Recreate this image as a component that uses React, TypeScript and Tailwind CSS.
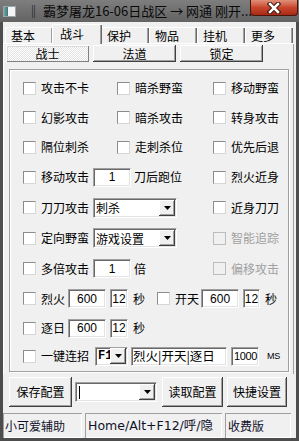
import React from "react";

const NUM = "font-['Liberation_Sans',Arial,sans-serif]";
const RAISED =
  "bg-[#f0f0f0] shadow-[inset_-1px_-1px_0_#404040,inset_1px_1px_0_#ffffff,inset_-2px_-2px_0_#a0a0a0,inset_2px_2px_0_#f0f0f0]";
const SUNKEN =
  "bg-white border border-t-[#a0a0a0] border-l-[#a0a0a0] border-r-white border-b-white shadow-[inset_1px_1px_0_#696969,inset_-1px_-1px_0_#e3e3e3]";

function Arrow() {
  return (
    <svg width="7" height="4" viewBox="0 0 7 4" className="block">
      <path d="M0 0H7L3.5 4Z" fill="#000" />
    </svg>
  );
}

function Check({ disabled = false }: { disabled?: boolean }) {
  return (
    <span
      className={`block w-[13px] h-[13px] shrink-0 border ${
        disabled
          ? "border-[#bcbcbc] bg-[#f0f0f0]"
          : "border-t-[#8c8c8c] border-l-[#8c8c8c] border-r-[#d6d6d6] border-b-[#d6d6d6] bg-white"
      }`}
    />
  );
}

function CL({ label, disabled = false }: { label: string; disabled?: boolean }) {
  return (
    <div className="flex items-center">
      <Check disabled={disabled} />
      <span className={`ml-[5px] ${disabled ? "text-[#a0a0a0]" : ""}`}>{label}</span>
    </div>
  );
}

function Field({ className = "", children }: { className?: string; children?: React.ReactNode }) {
  return <div className={`${SUNKEN} h-[19px] flex items-center shrink-0 ${NUM} ${className}`}>{children}</div>;
}

function Combo({ className = "", children }: { className?: string; children?: React.ReactNode }) {
  return (
    <div className={`${SUNKEN} flex items-center pl-[2px] pr-[1px] shrink-0 ${className}`}>
      <div className="flex-1 min-w-0 flex items-center leading-[15px] whitespace-nowrap">{children}</div>
      <div className={`${RAISED} w-[16px] h-[16px] flex items-center justify-center shrink-0`}>
        <Arrow />
      </div>
    </div>
  );
}

function Btn({ className = "", children }: { className?: string; children?: React.ReactNode }) {
  return <div className={`${RAISED} flex items-center justify-center shrink-0 ${className}`}>{children}</div>;
}

const tabs = ["基本", "战斗", "保护", "物品", "挂机", "更多"];

export default function App() {
  return (
    <div className="w-[299px] h-[441px] bg-[#4d4d4d] flex flex-col overflow-hidden font-['Noto_Sans_CJK_SC',sans-serif] text-[12px] leading-none text-black">
      {/* title bar */}
      <div className="h-[22px] shrink-0 flex items-start bg-gradient-to-b from-[#7e7e7e] to-[#636363]">
        <div className="ml-[3px] mt-[6px]">
          <svg width="13" height="11" viewBox="0 0 13 11" className="block">
            <rect x="0" y="0" width="13" height="11" fill="#f4f4f4" />
            <rect x="0" y="0" width="2" height="11" fill="#6fa0b0" />
            <rect x="2" y="0" width="2" height="11" fill="#4f9a6a" />
            <rect x="4" y="0" width="1" height="11" fill="#3f6fb0" />
            <rect x="0.5" y="0.5" width="12" height="10" fill="none" stroke="#9aa4a8" />
          </svg>
        </div>
        <div className="ml-[11px] mt-[3px] text-[13px] leading-[16px] whitespace-nowrap flex-1 min-w-0 text-[#0a0a0a]">
          ‖ 霸梦屠龙16-06日战区 → 网通 刚开...
        </div>
        <div className="mr-[1px] w-[48px] h-[16px] shrink-0 rounded-b-[4px] border border-t-0 border-[#4a1408] bg-gradient-to-b from-[#e0907a] via-[#c8452c] to-[#a82a14] flex items-center justify-center">
          <svg width="14" height="12" viewBox="0 0 14 12" className="block">
            <path d="M3 2L11 10M11 2L3 10" stroke="#3a1208" strokeWidth="4.5" strokeLinecap="square" />
            <path d="M3 2L11 10M11 2L3 10" stroke="#ffffff" strokeWidth="2.5" strokeLinecap="square" />
          </svg>
        </div>
      </div>

      {/* client */}
      <div className="flex-1 mx-[3px] mb-[3px] bg-[#f0f0f0] flex flex-col">
        {/* tabs */}
        <div className="h-[21px] flex items-end pl-[2px] shrink-0">
          {tabs.map((t) =>
            t === "战斗" ? (
              <div
                key={t}
                className="relative z-10 w-[50px] h-[20px] -mx-[1px] -mb-[1px] pb-[1px] pl-[7px] flex items-center bg-[#f0f0f0] border-l border-t border-white rounded-tl-[2px] shadow-[inset_-1px_0_0_#696969,inset_-2px_0_0_#a0a0a0]"
              >
                {t}
              </div>
            ) : (
              <div
                key={t}
                className="w-[48px] h-[16px] pl-[5px] flex items-center bg-[#f0f0f0] border-l border-t border-white rounded-tl-[2px] shadow-[inset_-1px_0_0_#696969,inset_-2px_0_0_#a0a0a0]"
              >
                {t}
              </div>
            )
          )}
        </div>

        {/* tab page */}
        <div className="w-[291px] h-[331px] shrink-0 border-t border-l border-white shadow-[inset_-1px_0_0_#a0a0a0] flex flex-col">
          <div className="mt-[1px] ml-[2px] flex gap-[4px]">
            <div className="w-[83px] h-[17px] flex items-center justify-center bg-[image:repeating-conic-gradient(#ffffff_0%_25%,#e2e2e2_0%_50%)] bg-[length:2px_2px] shadow-[inset_1px_1px_0_#ffffff,inset_-1px_-1px_0_#808080,inset_2px_2px_0_#d8d8d8]">
              战士
            </div>
            <Btn className="w-[83px] h-[17px]">法道</Btn>
            <Btn className="w-[83px] h-[17px]">锁定</Btn>
          </div>

          {/* group box */}
          <div className="mt-[7px] ml-[5px] w-[280px] h-[303px] border border-[#a0a0a0] shadow-[inset_1px_1px_0_#ffffff,1px_1px_0_#ffffff] pt-[3px] pl-[13px] flex flex-col">
            <div className="h-[30px] flex items-center">
              <div className="w-[94px]"><CL label="攻击不卡" /></div>
              <div className="w-[96px]"><CL label="暗杀野蛮" /></div>
              <CL label="移动野蛮" />
            </div>
            <div className="h-[29px] flex items-center">
              <div className="w-[94px]"><CL label="幻影攻击" /></div>
              <div className="w-[96px]"><CL label="暗杀攻击" /></div>
              <CL label="转身攻击" />
            </div>
            <div className="h-[30px] flex items-center">
              <div className="w-[94px]"><CL label="隔位刺杀" /></div>
              <div className="w-[96px]"><CL label="走刺杀位" /></div>
              <CL label="优先后退" />
            </div>
            <div className="h-[30px] flex items-center">
              <div className="w-[190px] flex items-center">
                <Check />
                <span className="ml-[5px]">移动攻击</span>
                <Field className="ml-[4px] w-[38px] justify-center">1</Field>
                <span className="ml-[3px]">刀后跑位</span>
              </div>
              <CL label="烈火近身" />
            </div>
            <div className="h-[31px] flex items-center">
              <div className="w-[190px] flex items-center">
                <Check />
                <span className="ml-[5px]">刀刀攻击</span>
                <Combo className="ml-[4px] w-[84px] h-[20px]">刺杀</Combo>
              </div>
              <CL label="近身刀刀" />
            </div>
            <div className="h-[30px] flex items-center">
              <div className="w-[190px] flex items-center">
                <Check />
                <span className="ml-[5px]">定向野蛮</span>
                <Combo className="ml-[4px] w-[84px] h-[20px]">游戏设置</Combo>
              </div>
              <CL label="智能追踪" disabled />
            </div>
            <div className="h-[31px] flex items-center">
              <div className="w-[190px] flex items-center">
                <Check />
                <span className="ml-[5px]">多倍攻击</span>
                <Field className="ml-[4px] w-[38px] justify-center">1</Field>
                <span className="ml-[3px]">倍</span>
              </div>
              <CL label="偏移攻击" disabled />
            </div>
            <div className="h-[29px] flex items-center">
              <Check />
              <span className="ml-[5px]">烈火</span>
              <Field className="ml-[3px] w-[38px] justify-center">600</Field>
              <Field className="ml-[4px] w-[18px] justify-center">12</Field>
              <span className="ml-[5px]">秒</span>
              <div className="ml-[12px]"><Check /></div>
              <span className="ml-[5px]">开天</span>
              <Field className="ml-[2px] w-[38px] justify-center">600</Field>
              <Field className="ml-[4px] w-[17px] justify-center">12</Field>
              <span className="ml-[5px]">秒</span>
            </div>
            <div className="h-[30px] flex items-center">
              <Check />
              <span className="ml-[5px]">逐日</span>
              <Field className="ml-[3px] w-[38px] justify-center">600</Field>
              <Field className="ml-[4px] w-[18px] justify-center">12</Field>
              <span className="ml-[5px]">秒</span>
            </div>
            <div className="h-[26px] flex items-center">
              <Check />
              <span className="ml-[5px]">一键连招</span>
              <Combo className="ml-[6px] w-[33px] h-[19px]">
                <span className="font-['Liberation_Mono',monospace] text-[12px] font-bold">F1</span>
              </Combo>
              <Field className="ml-[3px] w-[96px] pl-[1px]">
                <span className="font-['Noto_Sans_CJK_SC',sans-serif] text-[12.5px]">烈火|开天|逐日</span>
              </Field>
              <Field className="ml-[4px] w-[28px] pl-[2px] text-[11px] tracking-[-0.4px]">1000</Field>
              <span className={`ml-[8px] text-[9px] ${NUM} tracking-[-0.3px]`}>MS</span>
            </div>
          </div>
        </div>

        {/* bottom buttons */}
        <div className="mt-[3px] ml-[6px] h-[30px] flex items-center shrink-0">
          <Btn className="w-[63px] h-[30px]">保存配置</Btn>
          <Combo className="ml-[3px] w-[82px] h-[20px]">
            <span className="block w-[1px] h-[13px] bg-black ml-[1px]" />
          </Combo>
          <Btn className="ml-[5px] w-[61px] h-[30px]">读取配置</Btn>
          <Btn className="ml-[4px] w-[60px] h-[30px]">快捷设置</Btn>
        </div>

        {/* status bar */}
        <div className="mt-[6px] h-[25px] flex shrink-0 text-[#10102a]">
          <div className="w-[79px] h-[25px] border-t border-l border-[#a0a0a0] shadow-[inset_-1px_-1px_0_#ffffff] pl-[1px] flex items-center">
            小可爱辅助
          </div>
          <div className="ml-[3px] w-[137px] h-[25px] border-t border-l border-[#a0a0a0] shadow-[inset_-1px_-1px_0_#ffffff] pl-[2px] flex items-center font-['DejaVu_Sans','Noto_Sans_CJK_SC',sans-serif] text-[12.5px] whitespace-nowrap">
            Home/Alt+F12/呼/隐
          </div>
          <div className="ml-[3px] w-[66px] h-[25px] border-t border-l border-[#a0a0a0] shadow-[inset_-1px_-1px_0_#ffffff] pl-[2px] flex items-center">
            收费版
          </div>
        </div>
      </div>
    </div>
  );
}
